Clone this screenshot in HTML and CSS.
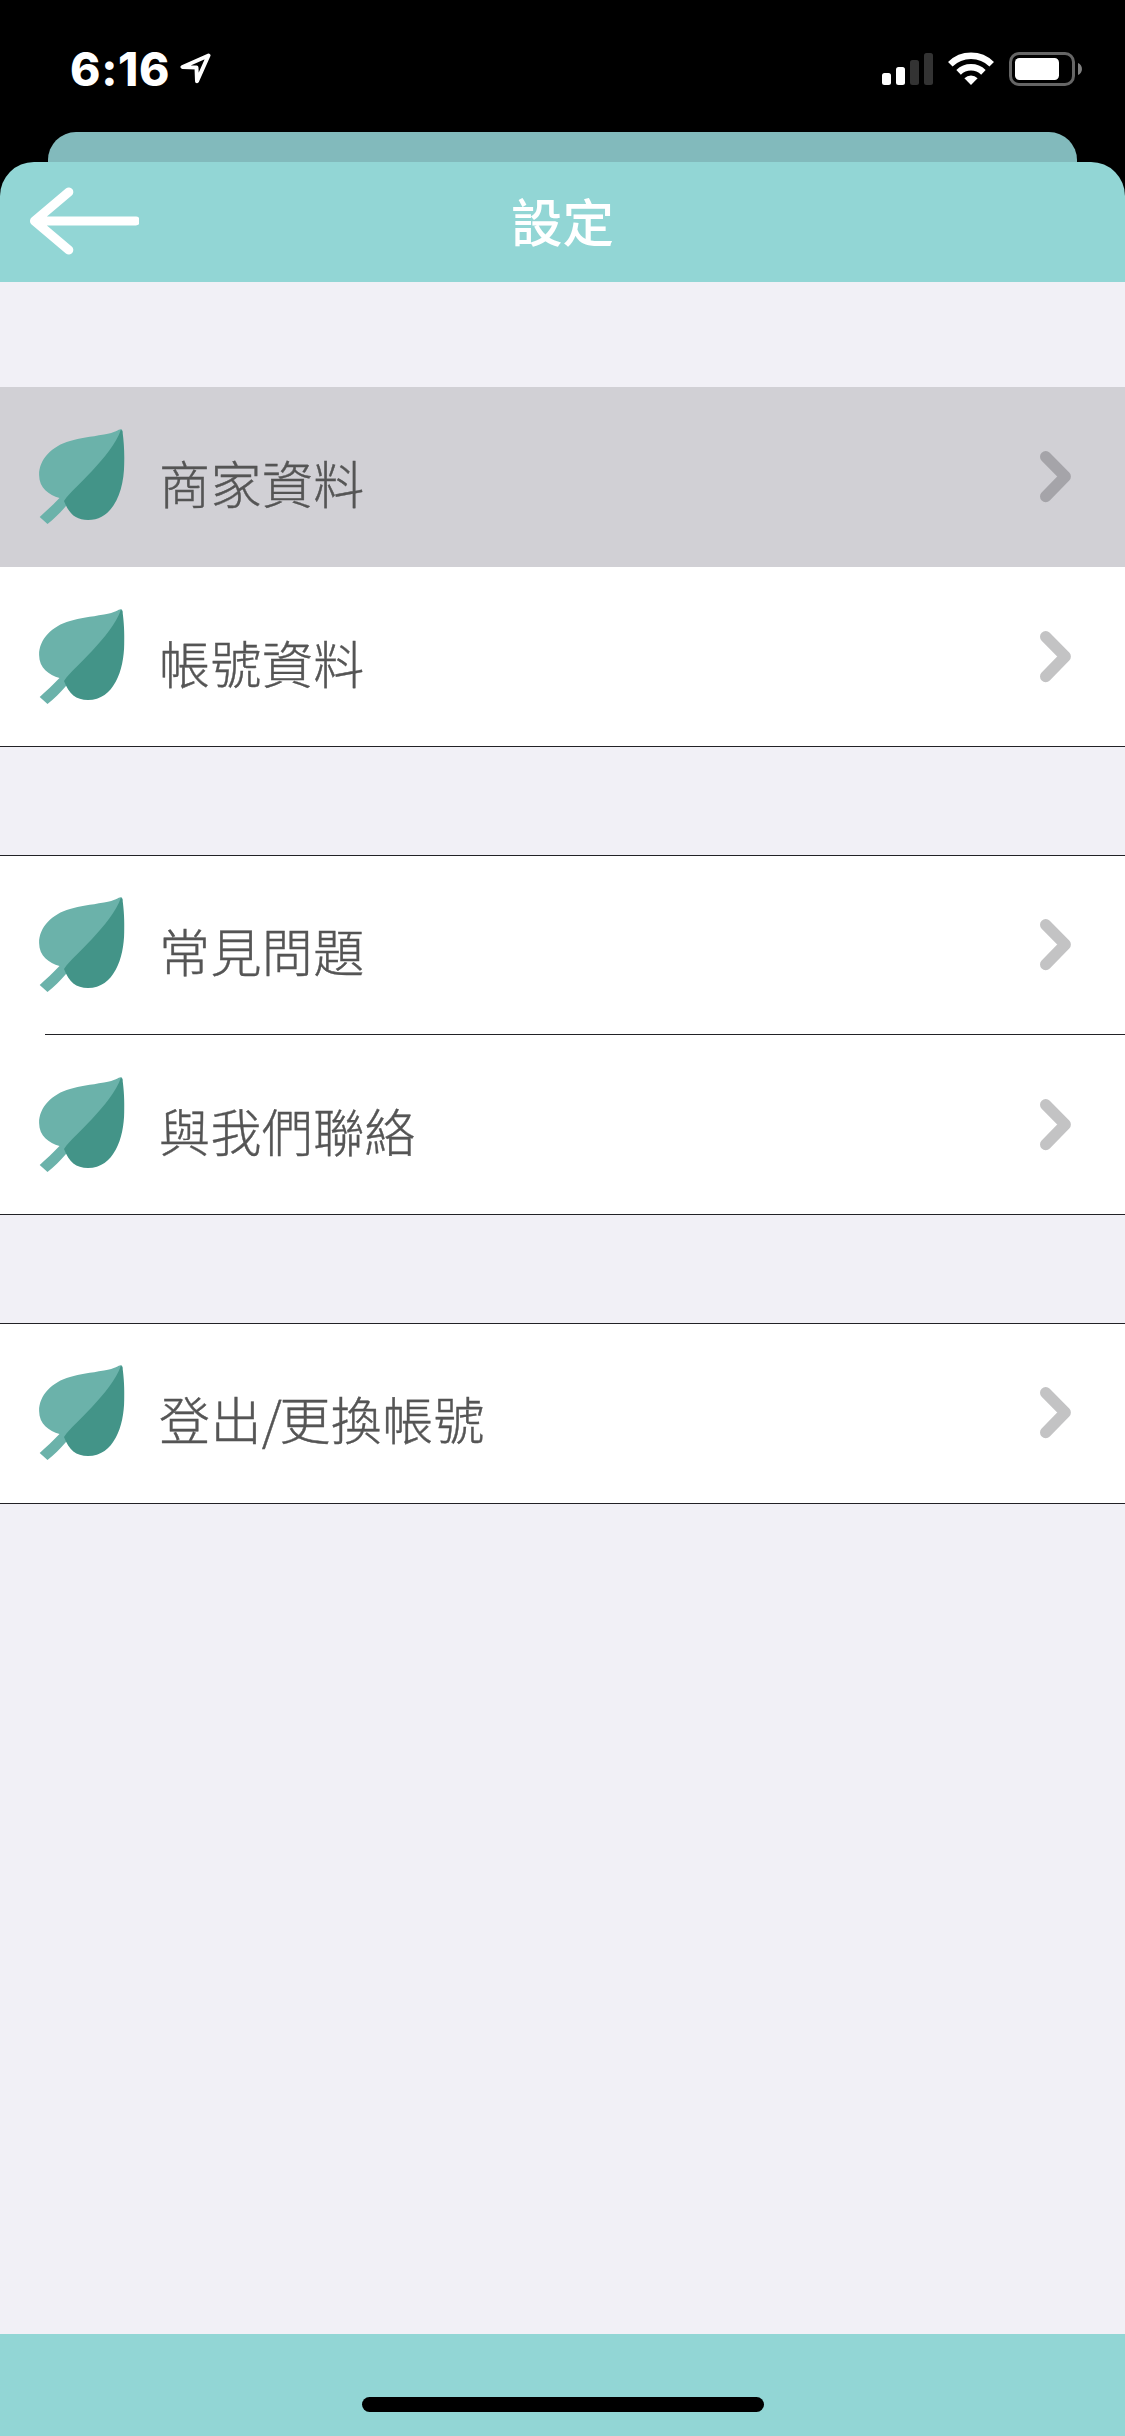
FILE: index.html
```html
<!DOCTYPE html>
<html lang="zh-Hant">
<head>
<meta charset="utf-8">
<title>設定</title>
<link rel="stylesheet" href="styles.css">
</head>
<body>
<svg width="0" height="0" class="symbols" aria-hidden="true">
  <symbol id="leaf" viewBox="0 0 86 96">
    <path class="leaf-light" d="M82 .2C79.500 0 77 3.500 65 5.500C51 8 41 9 31 12C13 17 .1 30 .1 46C.1 59 10 66 20.500 69C14 76 7 82 .7 88L8.500 95C15 90 21 84 27 77L75 25L83.500 3C83.500 1 83 .5 82 .2Z"/>
    <path class="leaf-dark" d="M82 .6L83.500 2.500C85 14 85.500 23 85.200 35C85 61 75 91 49 91C37 91 30 85 25 72C31 63 42 54 53 42C65 29 77 15 82 .6Z"/>
  </symbol>
  <symbol id="chevron" viewBox="0 0 32 52">
    <path d="M5.700 5.700L25.200 25.500L5.700 45.500" fill="none" stroke="currentColor" stroke-width="11.400" stroke-linecap="round" stroke-linejoin="round"/>
  </symbol>
</svg>
<div class="screen">
  <div class="status">
    <div class="status-left">
      <span class="time">6:16</span>
      <svg class="location" width="32" height="32" viewBox="0 0 32 32"><path d="M28.500 2.500L2.500 14L16.500 14.500L17 28.200Z" fill="none" stroke="#fff" stroke-width="4" stroke-linejoin="round"/></svg>
    </div>
    <div class="status-right">
      <svg width="51" height="32" viewBox="0 0 51 32">
        <rect x="0" y="20" width="9" height="12" rx="2.500" fill="#fff"/>
        <rect x="14" y="14" width="9" height="18" rx="2.500" fill="#fff"/>
        <rect x="28" y="7" width="9" height="25" rx="2.500" fill="#333"/>
        <rect x="42" y="0" width="9" height="32" rx="2.500" fill="#333"/>
      </svg>
      <svg class="wifi" width="46" height="33" viewBox="0 0 46 33">
        <g fill="none" stroke="#fff"><path d="M2.300 12.200A29.500 29.500 0 0 1 43.700 12.200" stroke-width="6.500"/><path d="M10.600 20.400A17.800 17.800 0 0 1 35.400 20.400" stroke-width="6.500"/></g>
        <path d="M16.400 26.300A9.400 9.400 0 0 1 29.600 26.300L23 33Z" fill="#fff"/>
      </svg>
      <svg width="73" height="34" viewBox="0 0 73 34">
        <rect x="1.500" y="1.500" width="63" height="31" rx="8.500" fill="none" stroke="#666" stroke-width="3"/>
        <rect x="6" y="6" width="44" height="22" rx="4.500" fill="#fff"/>
        <path d="M69 11C74.300 13 74.300 21 69 23Z" fill="#808080"/>
      </svg>
    </div>
  </div>
  <div class="sheet-behind"></div>
  <header class="header">
    <svg class="back" width="109" height="68" viewBox="0 0 109 68"><path d="M4.500 34H106M38.800 5L4.500 34L38.800 63" fill="none" stroke="#fff" stroke-width="9" stroke-linecap="round" stroke-linejoin="round"/></svg>
    <h1 class="title">設定</h1>
  </header>
  <main class="content">
    <section class="group plain-top">
      <div class="row selected"><svg class="leaf"><use href="#leaf"/></svg><span class="label">商家資料</span><svg class="chevron"><use href="#chevron"/></svg></div>
      <div class="row"><svg class="leaf"><use href="#leaf"/></svg><span class="label">帳號資料</span><svg class="chevron"><use href="#chevron"/></svg></div>
    </section>
    <section class="group">
      <div class="row inset-line"><svg class="leaf"><use href="#leaf"/></svg><span class="label">常見問題</span><svg class="chevron"><use href="#chevron"/></svg></div>
      <div class="row"><svg class="leaf"><use href="#leaf"/></svg><span class="label">與我們聯絡</span><svg class="chevron"><use href="#chevron"/></svg></div>
    </section>
    <section class="group">
      <div class="row"><svg class="leaf"><use href="#leaf"/></svg><span class="label">登出<span class="slash">/</span>更換帳號</span><svg class="chevron"><use href="#chevron"/></svg></div>
    </section>
  </main>
  <footer class="footer"><div class="home-bar"></div></footer>
</div>
</body>
</html>
```
FILE: styles.css
```css
* { box-sizing: border-box; }
body { margin: 0; background: #000; font-family: "Noto Sans CJK TC", sans-serif; }
svg { display: block; flex: none; }
.symbols { position: absolute; }
.leaf-light { fill: #6bb2aa; }
.leaf-dark { fill: #439488; }

.screen { width: 1125px; height: 2436px; display: flex; flex-direction: column; background: #000; }

.status { height: 132px; display: flex; justify-content: space-between; padding: 52px 43px 0 70px; }
.status-left, .status-right { display: flex; align-items: flex-start; }
.time { font: 800 46px/34px Inter, sans-serif; letter-spacing: 0.7px; color: #fff; width: 110px; white-space: nowrap; }
.location { margin-top: 1px; }
.status-right svg:first-child { margin-top: 1px; }
.wifi { margin: 0 15px; }

.sheet-behind { height: 30px; margin: 0 48px; background: #82babc; border-radius: 28px 28px 0 0; }
.header { height: 120px; background: #92d6d5; border-radius: 34px 34px 0 0; display: grid; grid-template-columns: 1fr auto 1fr; align-items: center; padding: 0 30px; }
.back { margin-top: -2px; }
.title { margin: -5px 0 0; color: #fff; font-size: 51.500px; line-height: 60px; font-weight: 500; }

.content { flex: 1; background: #f1f0f6; padding-top: 105px; display: flex; flex-direction: column; gap: 108px; }
.group { background: #fff; border-top: 1px solid #222226; border-bottom: 1px solid #222226; }
.plain-top { border-top: 0; }
.row { height: 179px; display: flex; align-items: flex-start; padding: 41px 53px 0 39px; }
.row + .row { padding-top: 42px; }
.plain-top .row { padding-top: 42px; }
.selected { height: 180px; background: #d1d0d5; }
.inset-line { background: linear-gradient(#222226, #222226) 45px 100% / 100% 1px no-repeat; }
.leaf { width: 86px; height: 96px; }
.label { flex: 1; margin: 23px 0 0 34px; font-size: 51px; line-height: 60px; font-weight: 300; letter-spacing: 0.400px; color: #555; -webkit-text-stroke: 0.4px #555; }
.slash { letter-spacing: -2.500px; }
.chevron { width: 32px; height: 52px; margin-top: 22px; color: #c3c3c4; }
.selected .chevron { color: #a5a4a9; }

.footer { height: 102px; background: #92d6d5; padding-top: 63px; }
.home-bar { width: 402px; height: 15px; margin-left: 362px; border-radius: 8px; background: #000; }
```
